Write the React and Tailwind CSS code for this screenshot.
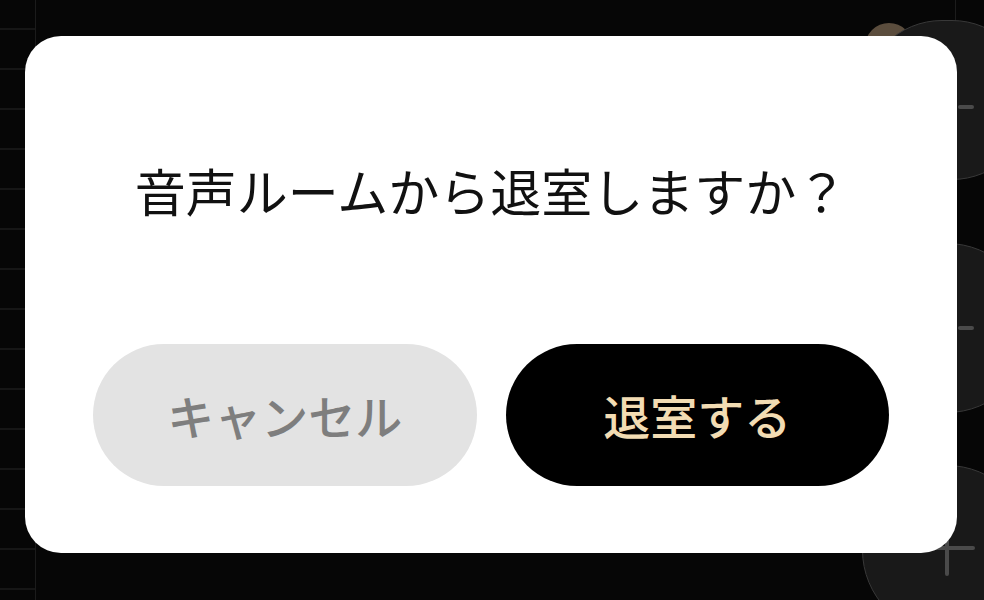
import React from 'react';

const rows = Array.from({ length: 16 });

function RoundButton({ size, top, children }) {
  return (
    <div
      className={`relative shrink-0 rounded-full bg-[#191919] border border-[#383838] flex items-center ${size} ${top}`}
    >
      {children}
    </div>
  );
}

export default function App() {
  return (
    <div
      className="relative w-[984px] h-[600px] overflow-hidden bg-[#060606] flex"
      style={{ fontFamily: '"Noto Sans CJK JP", "Noto Sans", sans-serif' }}
    >
      {/* Left rail */}
      <div className="w-[36px] shrink-0 border-r border-[#1b1b1b] overflow-hidden">
        <div className="-mt-[10px] flex flex-col">
          {rows.map((_, i) => (
            <div key={i} className="h-[40px] shrink-0 border-b-2 border-[#161616]" />
          ))}
        </div>
      </div>

      <div className="flex-1" />

      {/* Right controls */}
      <div className="relative w-[122px] shrink-0 flex flex-col">
        <div className="absolute left-[93px] top-0 h-[60px] w-px bg-[#1c1c1c]" />
        <div className="absolute left-[3px] top-[23px] w-[48px] h-[48px] rounded-full bg-[#5b4d3d]" />
        <RoundButton size="w-[170px] h-[160px]" top="mt-[20px]">
          <div className="ml-[95px] mt-[14px] w-[16px] h-[4px] rounded bg-[#4a4a4a]" />
        </RoundButton>
        <RoundButton size="w-[170px] h-[170px]" top="mt-[63px]">
          <div className="ml-[95px] w-[16px] h-[4px] rounded bg-[#4a4a4a]" />
        </RoundButton>
        <RoundButton size="w-[170px] h-[170px]" top="mt-[52px]">
          <div className="relative ml-[56px] -mt-[4px] w-[56px] h-[56px]">
            <div className="absolute left-0 top-[26px] w-[56px] h-[4px] rounded bg-[#4a4a4a]" />
            <div className="absolute left-[26px] top-0 w-[4px] h-[56px] rounded bg-[#4a4a4a]" />
          </div>
        </RoundButton>
      </div>

      {/* Dialog */}
      <div className="absolute left-[25px] top-[36px] w-[932px] h-[517px] rounded-[36px] bg-white flex flex-col items-center px-[68px] pt-[124px] pb-[67px]">
        <p className="text-[51px] leading-[60px] text-[#111111] font-normal">
          音声ルームから退室しますか？
        </p>
        <div className="mt-auto w-full flex gap-[29px]">
          <button className="flex-1 h-[142px] rounded-full bg-[#e3e3e3] text-[#7e7e7e] text-[47px] font-medium">
            キャンセル
          </button>
          <button className="flex-1 h-[142px] rounded-full bg-black text-[#f2dcb3] text-[47px] font-medium">
            退室する
          </button>
        </div>
      </div>
    </div>
  );
}
